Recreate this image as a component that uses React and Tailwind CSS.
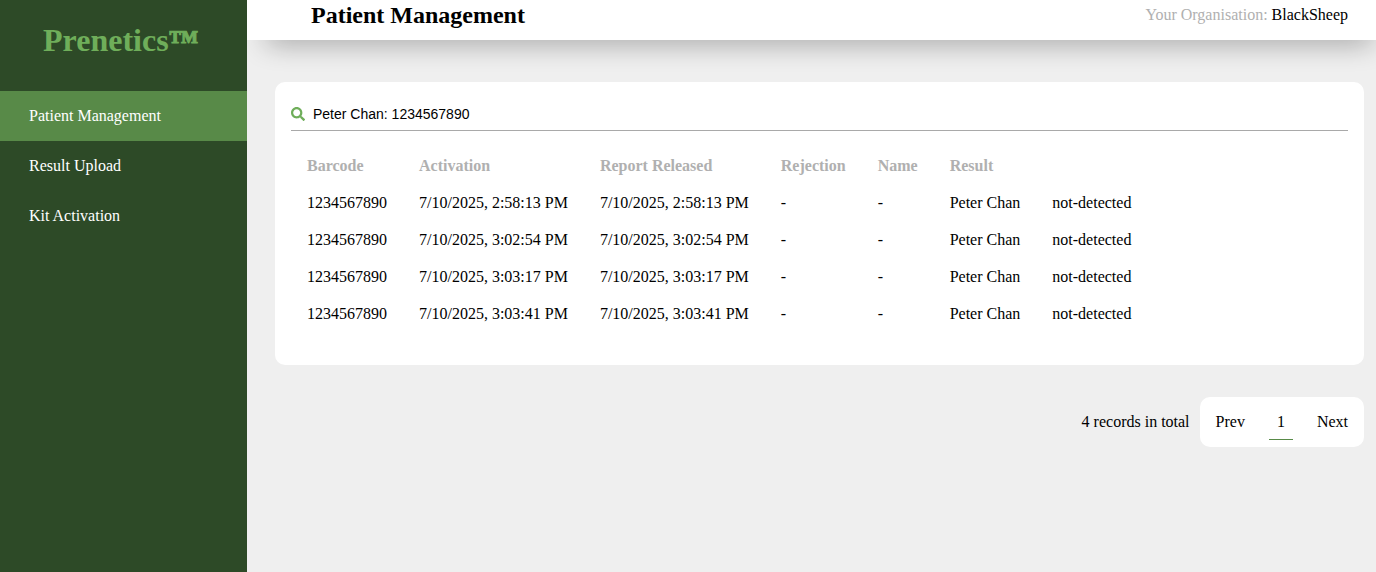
import { useState } from "react";
import { FaSearch } from "react-icons/fa";

const navItems = ["Patient Management", "Result Upload", "Kit Activation"];

const columns = ["Barcode", "Activation", "Report Released", "Rejection", "Name", "Result"];

const times = ["2:58:13", "3:02:54", "3:03:17", "3:03:41"];

const records = times.map((time) => [
  "1234567890",
  `7/10/2025, ${time} PM`,
  `7/10/2025, ${time} PM`,
  "-",
  "-",
  "Peter Chan",
  "not-detected",
]);

function Sidebar() {
  return (
    <aside className="z-10 w-[247px] shrink-0 bg-[#2d4a27] text-white">
      <h1 className="px-[43px] pt-[22px] pb-[33px] text-[32px] leading-9 font-bold text-[#6fae5a]">
        Prenetics<span className="text-[30px] leading-none [-webkit-text-stroke:1px_#6fae5a]">™</span>
      </h1>
      <nav>
        {navItems.map((item, i) => (
          <a
            key={item}
            href="#"
            className={`flex h-[50px] items-center pl-[29px] ${i === 0 ? "bg-[#588a48]" : ""}`}
          >
            {item}
          </a>
        ))}
      </nav>
    </aside>
  );
}

function Header() {
  return (
    <header className="flex h-10 items-start justify-between bg-white pr-7 pl-16 shadow-[8px_13px_28px_-12px_rgba(0,0,0,0.45)]">
      <h2 className="text-2xl leading-[30px] font-bold">Patient Management</h2>
      <p className="leading-[30px]">
        <span className="text-[#b0b0b0]">Your Organisation:</span> BlackSheep
      </p>
    </header>
  );
}

function Results() {
  const [query, setQuery] = useState("Peter Chan: 1234567890");
  return (
    <section className="rounded-[10px] bg-white px-4 pt-4 pb-[33px]">
      <label className="flex h-[33px] items-center gap-2 border-b border-[#a9a9a9]">
        <FaSearch className="size-[14px] shrink-0 text-[#6fae5a]" aria-hidden="true" />
        <input
          type="text"
          aria-label="Search patients"
          value={query}
          onChange={(e) => setQuery(e.target.value)}
          className="w-full font-['Liberation_Sans',Arial,sans-serif] text-[14px] leading-4 outline-none"
        />
      </label>
      <table className="mt-4 text-left leading-[21px] whitespace-nowrap">
        <thead>
          <tr>
            {columns.map((column) => (
              <th key={column} className="px-4 py-2 font-bold text-[#b0b0b0]">
                {column}
              </th>
            ))}
            <td />
          </tr>
        </thead>
        <tbody>
          {records.map((record, r) => (
            <tr key={r}>
              {record.map((value, c) => (
                <td key={c} className="px-4 py-2">
                  {value}
                </td>
              ))}
            </tr>
          ))}
        </tbody>
      </table>
    </section>
  );
}

function Pagination() {
  return (
    <footer className="mt-8 flex items-center justify-end gap-[10px]">
      <p>4 records in total</p>
      <div className="flex h-[50px] items-center gap-6 rounded-[10px] bg-white px-4">
        <button type="button">Prev</button>
        <button type="button" className="h-9 border-b border-[#588a48] px-2">
          1
        </button>
        <button type="button">Next</button>
      </div>
    </footer>
  );
}

export default function App() {
  return (
    <div className="flex min-h-screen overflow-x-clip bg-[#efefef] font-['Liberation_Serif','Times_New_Roman',serif] text-base text-black">
      <Sidebar />
      <div className="min-w-0 flex-1">
        <Header />
        <main className="pt-[42px] pr-3 pl-7">
          <Results />
          <Pagination />
        </main>
      </div>
    </div>
  );
}
